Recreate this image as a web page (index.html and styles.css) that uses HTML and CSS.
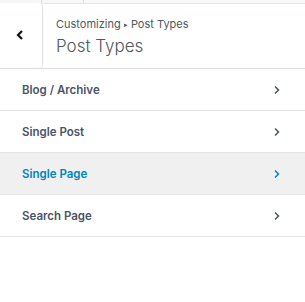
FILE: index.html
```html
<!DOCTYPE html>
<html>
<head>
<meta charset="utf-8">
<link rel="stylesheet" href="styles.css">
</head>
<body>
<div class="topstrip"><span class="tab"></span><span class="tab"></span></div>
<div class="header">
  <button class="back" aria-label="Back">
    <svg width="10" height="12" viewBox="0 0 10 12"><path d="M7 2 L3 6 L7 10" fill="none" stroke="#111" stroke-width="2.2"/></svg>
  </button>
  <div class="titles">
    <div class="crumb">Customizing <span class="tri">▸</span> Post Types</div>
    <div class="title">Post Types</div>
  </div>
</div>
<ul class="list">
  <li class="item"><span>Blog / Archive</span><svg class="chev" width="8" height="10" viewBox="0 0 8 10"><path d="M2 1.5 L5.5 5 L2 8.5" fill="none" stroke="currentColor" stroke-width="1.5"/></svg></li>
  <li class="item"><span>Single Post</span><svg class="chev" width="8" height="10" viewBox="0 0 8 10"><path d="M2 1.5 L5.5 5 L2 8.5" fill="none" stroke="currentColor" stroke-width="1.5"/></svg></li>
  <li class="item active"><span>Single Page</span><svg class="chev" width="8" height="10" viewBox="0 0 8 10"><path d="M2 1.5 L5.5 5 L2 8.5" fill="none" stroke="currentColor" stroke-width="1.5"/></svg></li>
  <li class="item"><span>Search Page</span><svg class="chev" width="8" height="10" viewBox="0 0 8 10"><path d="M2 1.5 L5.5 5 L2 8.5" fill="none" stroke="currentColor" stroke-width="1.5"/></svg></li>
</ul>
</body>
</html>
```
FILE: styles.css
```css
html, body {
  margin: 0;
  padding: 0;
  background: #fff;
  font-family: Inter, "Open Sans", sans-serif;
}
.topstrip {
  height: 3px;
  background: #f6f7f7;
  border-bottom: 1px solid #e6e7e8;
  display: flex;
}
.tab {
  width: 41px;
  border-right: 1px solid #dcdcde;
}
.header {
  display: flex;
  height: 65px;
  border-bottom: 1px solid #dcdcde;
  margin-top: -1px;
}
.back {
  width: 43px;
  border: 0;
  border-right: 1px solid #e0e0e0;
  border-radius: 0 4px 4px 0;
  background: #fff;
  padding: 0 2px 1px 0;
  display: flex;
  align-items: center;
  justify-content: center;
}
.titles {
  padding-left: 13px;
  padding-top: 14px;
}
.crumb {
  font-size: 11px;
  line-height: 14px;
  color: #50575e;
}
.tri {
  font-size: 7px;
  vertical-align: 1px;
}
.title {
  font-size: 17px;
  font-weight: 300;
  line-height: 22px;
  color: #50575e;
  margin-top: 3px;
}
.list {
  list-style: none;
  margin: 0;
  padding: 0;
}
.item {
  height: 41px;
  border-bottom: 1px solid #e4e4e6;
  display: flex;
  align-items: center;
  justify-content: space-between;
  padding: 0 24px 0 22px;
  font-size: 11.5px;
  font-weight: 600;
  color: #4a5468;
}
.item .chev {
  color: #4a5468;
}
.item.active {
  background: #f0f0f1;
  color: #0085ba;
}
.item.active .chev {
  color: #0085ba;
}
```
